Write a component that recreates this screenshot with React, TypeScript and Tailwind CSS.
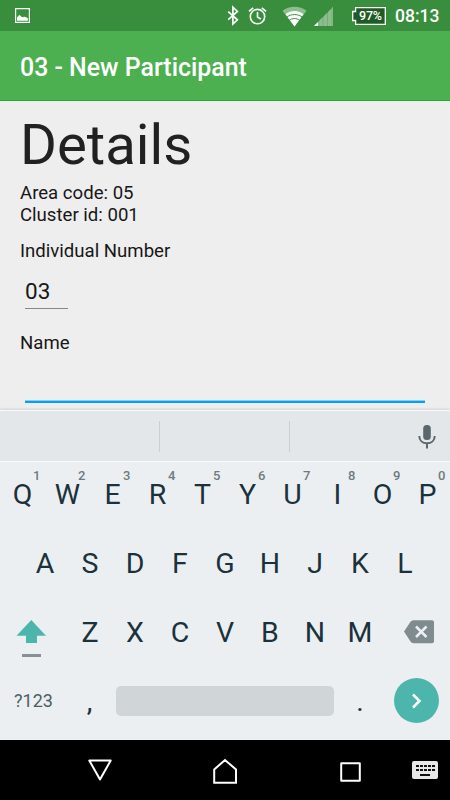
const topRow = ['Q', 'W', 'E', 'R', 'T', 'Y', 'U', 'I', 'O', 'P'];
const homeRow = ['A', 'S', 'D', 'F', 'G', 'H', 'J', 'K', 'L'];
const bottomRow = ['Z', 'X', 'C', 'V', 'B', 'N', 'M'];

function StatusBar() {
  return (
    <div className="flex h-[31px] items-center bg-[#388e3c] pl-[15px] text-white">
      <svg width="15" height="15" viewBox="0 0 15 15">
        <path fill="#fff" fillRule="evenodd" d="M0 0h15v15H0zM1.2 1.2v12.6h12.6V1.2z" />
        <path fill="#fff" d="M2 12.7V9.5l1.5-1.8 1-.7 1.3 1 .9 1 1.4.3 1-.9 1 .8.9-.3 1.9 1.6v2.2z" />
      </svg>
      <svg width="121" height="31" viewBox="226 0 121 31" className="ml-[196px]">
        <path d="M228.200 11.600l9.200 8.200-4.500 4.200V7.200l4.500 4.300-9.200 8.200" fill="none" stroke="#fff" strokeWidth="1.700" />
        <g fill="none" stroke="#fff" strokeWidth="1.600">
          <circle cx="257.500" cy="16.600" r="7.200" />
          <path d="M257.500 12v5l3.400 2.100M249 11.400l4.200-3.600M266 11.400l-4.200-3.600" />
        </g>
        <path d="M282.500 10.800C289 5.300 300 5.300 306.500 10.800L294.500 26.500z" fill="#8bbd8d" />
        <path d="M285.500 14.200c5.500-4.400 12.500-4.400 18 0l-9 12.300z" fill="#fff" />
        <g fill="none" stroke="#388e3c" strokeWidth="1">
          <path d="M286.500 17.300c5-3.700 11-3.700 16 0M289 20.600c3.500-2.700 7.500-2.700 11 0" />
        </g>
        <path d="M318 26v-4l1-1v5zM319.500 26v-5.700l3-3V26zM323.500 26v-9.500l3.500-3.500V26zM328 26V12l3.500-3.500V26zM332.300 26V7.500l.7-.7v19.200z" fill="#8bbd8d" />
        <path d="M318 22.300L333 7v19h-15z" fill="#8bbd8d" opacity=".7" />
        <path d="M313.800 26h4.200v-4z" fill="#fff" />
      </svg>
      <div className="relative ml-[5px] h-[18px] w-[34px]">
        <svg width="34" height="18" viewBox="0 0 34 18" className="absolute inset-0">
          <path d="M3.600.7H33.300V17.300H3.600V13.500H.7V4.500H3.600z" fill="#205b25" stroke="#fff" strokeWidth="1.300" />
        </svg>
        <span className="absolute left-[7px] top-0 text-[12.500px] leading-[18px] font-medium tracking-[-0.2px]">97%</span>
      </div>
      <span className="ml-[9px] mt-[2px] text-[17.500px] leading-none font-medium">08:13</span>
    </div>
  );
}

function Form() {
  return (
    <main className="h-[309px] bg-[#eeeeee] px-5 text-[18.600px] leading-[22px] text-[#171717]">
      <h1 className="pt-[11px] text-[56.300px] leading-[66px] text-[#212121]">Details</h1>
      <p className="pt-[4px]">Area code: 05</p>
      <p>Cluster id: 001</p>
      <p className="mt-[14px]">Individual Number</p>
      <div className="mt-[15px] ml-[5px] h-[32px] w-[43px] border-b border-[#888888] text-[22.500px] leading-[28px]">
        03
      </div>
      <p className="mt-[23px]">Name</p>
      <div className="mt-[46px] mx-[5px] h-[3px] border-t border-[#8bcdf2] bg-[#03a1f4]" />
    </main>
  );
}

function Suggestions() {
  return (
    <div className="flex h-[52px] items-center border-y border-[#fafbfb] bg-[#e4e7e9] shadow-[0_-1px_2px_#cfcfcf]">
      <div className="h-[31px] w-[160px] border-r border-[#cbcfd1]" />
      <div className="h-[31px] w-[130px] border-r border-[#cbcfd1]" />
      <svg width="18" height="25" viewBox="0 0 18 25" className="ml-[128px]">
        <rect x="5.200" y="1" width="7.600" height="15" rx="3.500" fill="#5b676d" />
        <path d="M1.300 12c0 4.500 3.200 7.300 7.700 7.300s7.700-2.800 7.700-7.300M9 19v5.500" fill="none" stroke="#5b676d" strokeWidth="2" />
      </svg>
    </div>
  );
}

function Key({ label, hint }: { label: string; hint?: string }) {
  return (
    <div className="relative w-[45px] text-center">
      {label}
      {hint && (
        <span className="absolute top-[6px] left-[33px] text-[13px] leading-[16px] font-medium text-[#6f7b80]">{hint}</span>
      )}
    </div>
  );
}

function Keyboard() {
  return (
    <div className="h-[278px] bg-[#eceff1] text-[28.500px] leading-[66px] text-[#1b323c]">
      <div className="flex h-[69px]">
        {topRow.map((k, i) => (
          <Key key={k} label={k} hint={String((i + 1) % 10)} />
        ))}
      </div>
      <div className="flex h-[68px] justify-center">
        {homeRow.map((k) => (
          <Key key={k} label={k} />
        ))}
      </div>
      <div className="flex h-[69px] leading-[68px]">
        <svg width="67.500" height="69" viewBox="0 0 67.500 69">
          <path d="M31.300 21L46 36.800H37v7.200H26v-7.200H16.500z" fill="#4db6ac" />
          <path d="M22 55h19v3H22z" fill="#869197" />
        </svg>
        {bottomRow.map((k) => (
          <Key key={k} label={k} />
        ))}
        <svg width="67.500" height="69" viewBox="382.500 599 67.500 69">
          <path d="M403.500 631.500l6.500-9.700q1-1.600 3-1.600h18.500q2 0 2 2v19q0 2-2 2H413q-2 0-3-1.600z" fill="#7f8b8f" />
          <path d="M415.500 626.500l10.500 10.500M426 626.500L415.500 637" stroke="#eceff1" strokeWidth="2.500" />
        </svg>
      </div>
      <div className="flex h-[72px] items-start leading-[68px]">
        <span className="w-[67px] text-center text-[18px] leading-[66px] text-[#4b5e67]">?123</span>
        <Key label="," />
        <div className="mt-[18px] ml-[4px] h-[30px] w-[218px] rounded-[5px] bg-[#d0d5d8]" />
        <span className="w-[52px] text-center">.</span>
        <div className="mt-[10px] ml-[8px] flex h-[45px] w-[45px] items-center justify-center rounded-full bg-[#4db6ac]">
          <svg width="11" height="16" viewBox="0 0 11 16">
            <path d="M2 1.500L8.500 8 2 14.500" fill="none" stroke="#fff" strokeWidth="2.500" />
          </svg>
        </div>
      </div>
    </div>
  );
}

function NavBar() {
  return (
    <nav className="flex h-[60px] bg-black">
      <svg width="450" height="60" viewBox="0 740 450 60" fill="none" stroke="#fff" strokeWidth="2" strokeLinejoin="round">
        <path d="M89.300 760.500h21.400L100 779.500z" />
        <path d="M214.200 769.500L225 760l11 9.500v13.300h-21.800z" strokeLinejoin="miter" />
        <path d="M341.200 763.200h18.600v17.600h-18.600z" />
        <rect x="412" y="761" width="26" height="18" rx="2" fill="#e8e8e8" stroke="none" />
        <path d="M416 766h19M416 770h19" stroke="#111" strokeDasharray="3 1" strokeWidth="2.200" />
        <path d="M420 775h10" stroke="#111" />
      </svg>
    </nav>
  );
}

export default function App() {
  return (
    <div className="h-[800px] w-[450px] overflow-hidden bg-black font-[Roboto,sans-serif]">
      <StatusBar />
      <header className="flex h-[70px] items-center border-b border-[#26a92f] bg-[#4caf50] pt-[6px] pl-5 text-[24.900px] leading-none font-medium text-white">
        03 - New Participant
      </header>
      <Form />
      <Suggestions />
      <Keyboard />
      <NavBar />
    </div>
  );
}
